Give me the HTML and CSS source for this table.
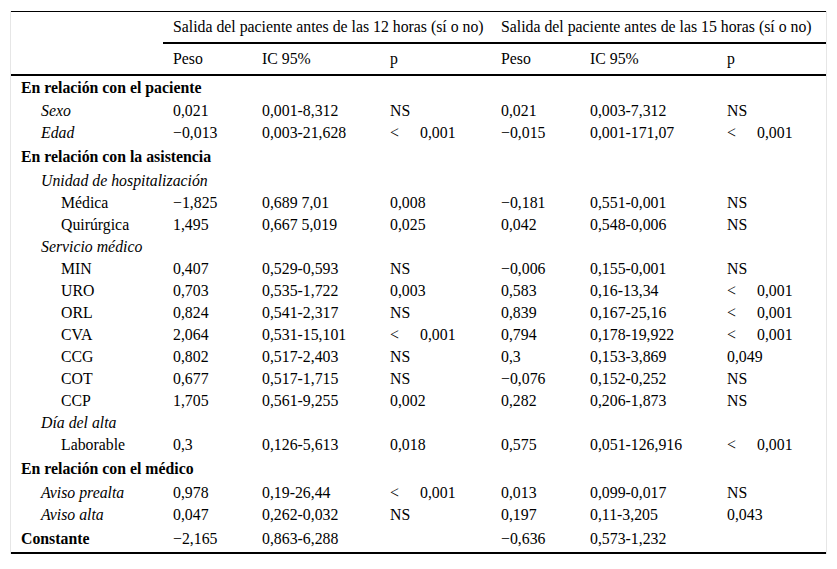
FILE: index.html
```html
<!DOCTYPE html>
<html lang="es">
<head>
<meta charset="utf-8">
<title>Tabla</title>
<link rel="stylesheet" href="styles.css">
</head>
<body>
<div class="frame">
<table class="data">
<colgroup>
<col class="c-label"><col class="c-peso"><col class="c-ic"><col class="c-p"><col class="c-peso"><col class="c-ic2"><col class="c-p2">
</colgroup>
<thead>
<tr class="group-row">
<th></th>
<th colspan="3" class="group">Salida del paciente antes de las 12 horas (sí o no)</th>
<th colspan="3" class="group">Salida del paciente antes de las 15 horas (sí o no)</th>
</tr>
<tr class="sub-row">
<th></th>
<th>Peso</th><th>IC 95%</th><th>p</th>
<th>Peso</th><th>IC 95%</th><th>p</th>
</tr>
</thead>
<tbody>
<tr class="section first"><td colspan="7">En relación con el paciente</td></tr>
<tr><td class="l1 it">Sexo</td><td>0,021</td><td>0,001-8,312</td><td>NS</td><td>0,021</td><td>0,003-7,312</td><td>NS</td></tr>
<tr><td class="l1 it">Edad</td><td>−0,013</td><td>0,003-21,628</td><td><span class="lt">&lt;</span>0,001</td><td>−0,015</td><td>0,001-171,07</td><td><span class="lt">&lt;</span>0,001</td></tr>
<tr class="section"><td colspan="7">En relación con la asistencia</td></tr>
<tr><td class="l1 it" colspan="7">Unidad de hospitalización</td></tr>
<tr><td class="l2">Médica</td><td>−1,825</td><td>0,689 7,01</td><td>0,008</td><td>−0,181</td><td>0,551-0,001</td><td>NS</td></tr>
<tr><td class="l2">Quirúrgica</td><td>1,495</td><td>0,667 5,019</td><td>0,025</td><td>0,042</td><td>0,548-0,006</td><td>NS</td></tr>
<tr><td class="l1 it" colspan="7">Servicio médico</td></tr>
<tr><td class="l2">MIN</td><td>0,407</td><td>0,529-0,593</td><td>NS</td><td>−0,006</td><td>0,155-0,001</td><td>NS</td></tr>
<tr><td class="l2">URO</td><td>0,703</td><td>0,535-1,722</td><td>0,003</td><td>0,583</td><td>0,16-13,34</td><td><span class="lt">&lt;</span>0,001</td></tr>
<tr><td class="l2">ORL</td><td>0,824</td><td>0,541-2,317</td><td>NS</td><td>0,839</td><td>0,167-25,16</td><td><span class="lt">&lt;</span>0,001</td></tr>
<tr><td class="l2">CVA</td><td>2,064</td><td>0,531-15,101</td><td><span class="lt">&lt;</span>0,001</td><td>0,794</td><td>0,178-19,922</td><td><span class="lt">&lt;</span>0,001</td></tr>
<tr><td class="l2">CCG</td><td>0,802</td><td>0,517-2,403</td><td>NS</td><td>0,3</td><td>0,153-3,869</td><td>0,049</td></tr>
<tr><td class="l2">COT</td><td>0,677</td><td>0,517-1,715</td><td>NS</td><td>−0,076</td><td>0,152-0,252</td><td>NS</td></tr>
<tr><td class="l2">CCP</td><td>1,705</td><td>0,561-9,255</td><td>0,002</td><td>0,282</td><td>0,206-1,873</td><td>NS</td></tr>
<tr><td class="l1 it" colspan="7">Día del alta</td></tr>
<tr><td class="l2">Laborable</td><td>0,3</td><td>0,126-5,613</td><td>0,018</td><td>0,575</td><td>0,051-126,916</td><td><span class="lt">&lt;</span>0,001</td></tr>
<tr class="section"><td colspan="7">En relación con el médico</td></tr>
<tr><td class="l1 it">Aviso prealta</td><td>0,978</td><td>0,19-26,44</td><td><span class="lt">&lt;</span>0,001</td><td>0,013</td><td>0,099-0,017</td><td>NS</td></tr>
<tr><td class="l1 it">Aviso alta</td><td>0,047</td><td>0,262-0,032</td><td>NS</td><td>0,197</td><td>0,11-3,205</td><td>0,043</td></tr>
<tr class="section total"><td>Constante</td><td>−2,165</td><td>0,863-6,288</td><td></td><td>−0,636</td><td>0,573-1,232</td><td></td></tr>
</tbody>
</table>
</div>
</body>
</html>
```
FILE: styles.css
```css
html, body {
  margin: 0;
  padding: 0;
  background: #fff;
}
body {
  font-family: "Liberation Serif", "Times New Roman", serif;
  font-size: 15.8px;
  color: #000;
}
.frame {
  margin: 11px 0 0 10px;
  width: 815px;
  border-left: 1px solid #e6e6e6;
  border-right: 1px solid #e6e6e6;
}
.data {
  border-collapse: collapse;
  table-layout: fixed;
  width: 815px;
  border-top: 1px solid #000;
  border-bottom: 2px solid #000;
}
.c-label { width: 152px; }
.c-peso { width: 89px; }
.c-ic { width: 128px; }
.c-p { width: 111px; }
.c-ic2 { width: 137px; }
.c-p2 { width: 109px; }
.data th, .data td {
  padding: 0 0 0 10px;
  text-align: left;
  vertical-align: middle;
  white-space: nowrap;
  font-weight: normal;
  line-height: 18px;
}
.group-row th { height: 30px; }
.group-row th.group { border-bottom: 2px solid #000; }
.sub-row th { height: 30px; border-bottom: 2px solid #000; }
.data tbody td { height: 22px; }
.data tbody tr.section td { height: 26px; font-weight: bold; }
.data tbody tr.section.first td { height: 24px; }
.data tbody tr.total td:not(:first-child) { font-weight: normal; }
.data td.l1 { padding-left: 30px; }
.data td.l2 { padding-left: 50px; }
.it { font-style: italic; }
.lt { display: inline-block; width: 30px; }
```
